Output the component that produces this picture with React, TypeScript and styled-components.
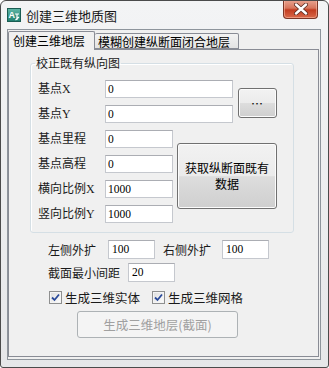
import styled, { createGlobalStyle } from 'styled-components';

const GlobalStyle = createGlobalStyle`
  html, body {
    margin: 0;
    padding: 0;
    background: #ffffff;
  }
  * {
    box-sizing: border-box;
  }
`;

const CJK = `"Liberation Serif", "Noto Sans CJK SC", serif`;

function AppIcon() {
    return (
        <svg width="14" height="14" viewBox="0 0 14 14">
            <defs>
                <linearGradient id="ig" x1="0" y1="0" x2="0" y2="1">
                    <stop offset="0" stopColor="#5fb7a6"/>
                    <stop offset="1" stopColor="#1f7f70"/>
                </linearGradient>
            </defs>
            <rect x="0.5" y="0.5" width="13" height="13" fill="url(#ig)" stroke="#1a5d53"/>
            <text x="1.5" y="10" fontSize="9" fontFamily="Liberation Sans, sans-serif" fontWeight="bold" fill="#fff">A</text>
            <path d="M8 6 L12 6 M10 6 L10 12 M8.5 12 L12 9" stroke="#fff" strokeWidth="1.2" fill="none"/>
        </svg>
    );
}

function CloseGlyph() {
    return (
        <svg width="14" height="12" viewBox="0 0 14 12">
            <path d="M2 1.5 L12 10.5 M12 1.5 L2 10.5" stroke="#5a2a20" strokeWidth="4" strokeLinecap="round"/>
            <path d="M2 1.5 L12 10.5 M12 1.5 L2 10.5" stroke="#ffffff" strokeWidth="2.4" strokeLinecap="round"/>
        </svg>
    );
}

function CheckMark() {
    return (
        <svg width="9" height="9" viewBox="0 0 9 9">
            <path d="M1 4.5 L3.5 7 L8 1.5" stroke="#2a4a9a" strokeWidth="1.8" fill="none"/>
        </svg>
    );
}

type FieldProps = {
    label: string
    value: string
    wide?: boolean
}

function Field({label, value, wide}: FieldProps) {
    return (
        <>
            <Label>{label}</Label>
            <Input wide={wide}>{value}</Input>
        </>
    );
}

function App() {
    return (
        <>
            <GlobalStyle/>
            <Window>
                <TitleBar>
                    <AppIcon/>
                    <Title>创建三维地质图</Title>
                    <CloseButton><CloseGlyph/></CloseButton>
                </TitleBar>
                <Client>
                    <TabStrip>
                        <Tab active>创建三维地层</Tab>
                        <Tab>模糊创建纵断面闭合地层</Tab>
                    </TabStrip>
                    <TabPanel>
                        <GroupBox>
                            <Legend>校正既有纵向图</Legend>
                            <FormGrid>
                                <Field label="基点X" value="0" wide/>
                                <BrowseButton>…</BrowseButton>
                                <Field label="基点Y" value="0" wide/>
                                <Field label="基点里程" value="0"/>
                                <FetchButton>
                                    <span>获取纵断面既有</span>
                                    <span>数据</span>
                                </FetchButton>
                                <Field label="基点高程" value="0"/>
                                <Field label="横向比例X" value="1000"/>
                                <Field label="竖向比例Y" value="1000"/>
                            </FormGrid>
                        </GroupBox>
                        <Lower>
                            <Row>
                                <RowLabel width={60}>左侧外扩</RowLabel>
                                <SmallInput>100</SmallInput>
                                <RowLabel width={59} gap={8}>右侧外扩</RowLabel>
                                <SmallInput>100</SmallInput>
                            </Row>
                            <Row>
                                <RowLabel width={80}>截面最小间距</RowLabel>
                                <SmallInput>20</SmallInput>
                            </Row>
                            <CheckRow>
                                <Check width={103}>
                                    <CheckBox><CheckMark/></CheckBox>
                                    生成三维实体
                                </Check>
                                <Check>
                                    <CheckBox><CheckMark/></CheckBox>
                                    生成三维网格
                                </Check>
                            </CheckRow>
                            <DisabledButton>生成三维地层(截面)</DisabledButton>
                        </Lower>
                    </TabPanel>
                </Client>
            </Window>
        </>
    );
}

export default App;


const Window = styled.div`
  width: 329px;
  height: 368px;
  display: flex;
  flex-direction: column;
  border: 1px solid #4b4b4b;
  border-radius: 6px 6px 3px 3px;
  background: linear-gradient(#f3f4f5, #e6e7e9);
  font-family: ${CJK};
  overflow: hidden;
`;

const TitleBar = styled.div`
  height: 28px;
  display: flex;
  align-items: center;
  padding-left: 6px;
  flex-shrink: 0;
`;

const Title = styled.div`
  margin-left: 5px;
  font-family: "Noto Sans CJK SC", sans-serif;
  font-size: 13px;
  color: #1a1a1a;
  flex: 1;
`;

const CloseButton = styled.div`
  align-self: flex-start;
  width: 35px;
  height: 19px;
  margin-right: 10px;
  margin-top: -1px;
  display: flex;
  align-items: center;
  justify-content: center;
  border: 1px solid #7a3526;
  border-top: none;
  border-radius: 0 0 4px 4px;
  background: linear-gradient(#e9a592 0%, #d7755c 45%, #c23c20 55%, #d9694a 100%);
  box-shadow: inset 0 0 0 1px rgba(255, 200, 180, 0.5);
`;

const Client = styled.div`
  flex: 1;
  margin: 0 7px 7px 6px;
  display: flex;
  flex-direction: column;
  border: 1px solid #8e959c;
  background: #f0f0f0;
  padding: 1px 1px 2px 0;
`;

const TabStrip = styled.div`
  height: 18px;
  display: flex;
  align-items: flex-end;
  flex-shrink: 0;
  position: relative;
  z-index: 1;
`;

type TabProps = { active?: boolean };

const Tab = styled.div<TabProps>`
  height: ${p => p.active ? '19px' : '16px'};
  width: ${p => p.active ? '87px' : '144px'};
  margin-bottom: ${p => p.active ? '-1px' : '0'};
  border: 1px solid #898c95;
  border-bottom: ${p => p.active ? 'none' : '1px solid #898c95'};
  border-left: ${p => p.active ? '1px solid #898c95' : 'none'};
  border-radius: 2px 2px 0 0;
  background: ${p => p.active ? '#f0f0f0' : 'linear-gradient(#f3f3f3, #e3e3e3)'};
  font-family: "Noto Sans CJK SC", sans-serif;
  font-size: 12px;
  line-height: ${p => p.active ? '18px' : '15px'};
  padding-left: ${p => p.active ? '4px' : '3px'};
  color: #000;
  white-space: nowrap;
`;

const TabPanel = styled.div`
  flex: 1;
  border: 1px solid #898c95;
  background: #f0f0f0;
  padding: 5px 0 0 21px;
  display: flex;
  flex-direction: column;
`;

const GroupBox = styled.fieldset`
  margin: 0;
  width: 264px;
  min-width: 0;
  border: 1px solid #d5dfe5;
  border-radius: 3px;
  padding: 9px 0 9px 7px;
  box-shadow: inset 1px 1px 0 #ffffff;
`;

const Legend = styled.legend`
  font-family: "Noto Sans CJK SC", sans-serif;
  font-size: 12px;
  line-height: 16px;
  padding: 0 1px;
  margin-left: -3px;
  color: #1a1a1a;
`;

const FormGrid = styled.div`
  display: grid;
  grid-template-columns: 67px 68px 4px 56px 5px 39px;
  grid-template-rows: 25px 25px 25px 25px 25px 18px;
  align-items: start;
`;

const Label = styled.div`
  grid-column: 1;
  font-size: 12px;
  line-height: 18px;
  color: #1a1a1a;
  white-space: nowrap;
`;

type InputProps = { wide?: boolean };

const Input = styled.div<InputProps>`
  grid-column: ${p => p.wide ? '2 / span 3' : '2'};
  height: 18px;
  border: 1px solid #c5c8ce;
  border-top-color: #abadb3;
  background: #fff;
  font-family: "Liberation Serif", serif;
  font-size: 11.5px;
  line-height: 16px;
  padding-left: 2px;
  color: #000;
`;

const ButtonBase = styled.div`
  display: flex;
  align-items: center;
  justify-content: center;
  border: 1px solid #707070;
  border-radius: 3px;
  background: linear-gradient(#f2f2f2 0%, #ebebeb 50%, #dddddd 51%, #cfcfcf 100%);
  box-shadow: inset 0 0 0 1px #fcfcfc;
  color: #000;
  font-family: "Noto Sans CJK SC", sans-serif;
`;

const BrowseButton = styled(ButtonBase)`
  grid-column: 6;
  grid-row: 1 / span 2;
  margin-top: 8px;
  height: 30px;
  font-size: 12px;
  letter-spacing: 1px;
`;

const FetchButton = styled(ButtonBase)`
  grid-column: 4 / span 3;
  grid-row: 3 / span 4;
  margin-top: 13px;
  height: 66px;
  flex-direction: column;
  font-size: 12px;
  line-height: 16px;
`;

const Lower = styled.div`
  display: flex;
  flex-direction: column;
  padding: 7px 0 0 18px;
`;

const Row = styled.div`
  display: flex;
  align-items: center;
  height: 19px;
  margin-bottom: 4px;
`;

type RowLabelProps = { width: number; gap?: number };

const RowLabel = styled.div<RowLabelProps>`
  width: ${p => p.width}px;
  margin-left: ${p => p.gap || 0}px;
  font-size: 12px;
  color: #1a1a1a;
  white-space: nowrap;
`;

const SmallInput = styled.div`
  width: 47px;
  height: 19px;
  border: 1px solid #c5c8ce;
  border-top-color: #abadb3;
  background: #fff;
  font-family: "Liberation Serif", serif;
  font-size: 11.5px;
  line-height: 17px;
  padding-left: 3px;
  color: #000;
`;

const CheckRow = styled.div`
  display: flex;
  align-items: center;
  height: 21px;
  margin: 1px 0 0 1px;
`;

type CheckProps = { width?: number };

const Check = styled.div<CheckProps>`
  display: flex;
  align-items: center;
  gap: 3px;
  width: ${p => p.width ? `${p.width}px` : 'auto'};
  font-family: "Noto Sans CJK SC", sans-serif;
  font-size: 12.5px;
  color: #1a1a1a;
  white-space: nowrap;
`;

const CheckBox = styled.div`
  width: 13px;
  height: 13px;
  border: 1px solid #8e8f8f;
  background: linear-gradient(135deg, #dcdcdc, #ffffff);
  display: flex;
  align-items: center;
  justify-content: center;
  box-shadow: inset 0 0 0 1px #f4f4f4;
`;

const DisabledButton = styled.div`
  width: 161px;
  height: 27px;
  margin: 3px 0 0 29px;
  display: flex;
  align-items: center;
  justify-content: center;
  border: 1px solid #adb2b5;
  border-radius: 3px;
  background: #f4f4f4;
  color: #a0a0a0;
  font-family: "Noto Sans CJK SC", sans-serif;
  font-size: 12.5px;
`;
